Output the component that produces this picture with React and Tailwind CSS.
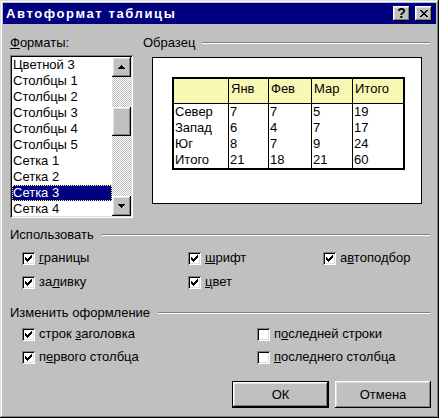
import React from "react";

const raised =
  "shadow-[inset_-1px_-1px_#000,inset_1px_1px_#dfdfdf,inset_-2px_-2px_#808080,inset_2px_2px_#fff]";
const button =
  "shadow-[inset_-1px_-1px_#000,inset_1px_1px_#fff,inset_-2px_-2px_#808080,inset_2px_2px_#dfdfdf]";
const sunken =
  "shadow-[inset_1px_1px_#808080,inset_-1px_-1px_#fff,inset_2px_2px_#000,inset_-2px_-2px_#dfdfdf]";
const dither =
  "[background-image:repeating-conic-gradient(#c0c0c0_0_25%,#fff_0_50%)] [background-size:2px_2px]";

const formats = [
  "Цветной 3",
  "Столбцы 1",
  "Столбцы 2",
  "Столбцы 3",
  "Столбцы 4",
  "Столбцы 5",
  "Сетка 1",
  "Сетка 2",
  "Сетка 3",
  "Сетка 4",
];

const columns = [
  { w: "w-[54px]", head: "", cells: ["Север", "Запад", "Юг", "Итого"] },
  { w: "w-[40px] border-l", head: "Янв", cells: ["7", "6", "8", "21"] },
  { w: "w-[43px] border-l", head: "Фев", cells: ["7", "4", "7", "18"] },
  { w: "w-[41px] border-l", head: "Мар", cells: ["5", "7", "9", "21"] },
  { w: "w-[51px] border-l", head: "Итого", cells: ["19", "17", "24", "60"] },
];

function Check({ on }) {
  return (
    <span className={`w-[13px] h-[13px] bg-white ${sunken} flex items-center justify-center shrink-0`}>
      {on && (
        <svg width="7" height="7" viewBox="0 0 7 7" shapeRendering="crispEdges">
          <path
            fill="#000"
            d="M6 0h1v1h-1zM5 1h2v1h-2zM0 2h1v1h-1zM4 2h3v1h-3zM0 3h2v1h-2zM3 3h3v1h-3zM0 4h5v1h-5zM1 5h3v1h-3zM2 6h1v1h-1z"
          />
        </svg>
      )}
    </span>
  );
}

function Option({ on, children }) {
  return (
    <div className="flex items-center h-[16px] gap-[4px]">
      <Check on={on} />
      <span className="leading-[16px] whitespace-nowrap">{children}</span>
    </div>
  );
}

function Group({ title, lineGap }) {
  return (
    <div className="flex items-center h-[16px]">
      <span className="leading-[16px] whitespace-nowrap">{title}</span>
      <div className={`flex-1 ${lineGap} h-[2px] border-t border-b border-t-[#808080] border-b-white`} />
    </div>
  );
}

function Arrow({ down }) {
  return (
    <svg width="7" height="4" viewBox="0 0 7 4" shapeRendering="crispEdges">
      <path fill="#000" d={down ? "M0 0h7v1h-7zM1 1h5v1h-5zM2 2h3v1h-3zM3 3h1v1h-1z" : "M3 0h1v1h-1zM2 1h3v1h-3zM1 2h5v1h-5zM0 3h7v1h-7z"} />
    </svg>
  );
}

export default function App() {
  return (
    <div
      className={`w-[439px] h-[418px] bg-[#c0c0c0] p-[3px] ${raised} font-['Liberation_Sans',Arial,sans-serif] text-[13px] text-black`}
    >
      {/* title bar */}
      <div className="h-[21px] bg-[#000080] flex items-center pl-[3px] pr-[4px]">
        <span className="flex-1 font-bold text-white text-[13px] tracking-[1.6px] whitespace-nowrap">
          Автоформат таблицы
        </span>
        <div
          className={`w-[17px] h-[15px] bg-[#c0c0c0] ${button} flex items-center justify-center font-bold text-[14px] leading-none pb-[1px]`}
        >
          ?
        </div>
        <div className={`ml-[5px] w-[17px] h-[15px] bg-[#c0c0c0] ${button} flex items-center justify-center`}>
          <svg width="8" height="7" viewBox="0 0 8 7" shapeRendering="crispEdges">
            <path
              fill="#000"
              d="M0 0h2v1h-2zM6 0h2v1h-2zM1 1h2v1h-2zM5 1h2v1h-2zM2 2h4v1h-4zM3 3h2v1h-2zM2 4h4v1h-4zM1 5h2v1h-2zM5 5h2v1h-2zM0 6h2v1h-2zM6 6h2v1h-2z"
            />
          </svg>
        </div>
      </div>

      <div className="pl-[7px] pr-[6px] pt-[11px]">
        {/* formats + sample */}
        <div className="flex">
          <div className="w-[123px]">
            <div className="h-[16px] leading-[16px]">
              <span className="underline">Ф</span>орматы:
            </div>
            <div className={`mt-[4px] h-[163px] p-[2px] ${sunken} bg-white flex`}>
              <div className="flex-1 overflow-hidden">
                {formats.map((f, i) => (
                  <div
                    key={f}
                    className={`h-[16px] leading-[16px] pl-[1px] whitespace-nowrap ${
                      i === 8 ? "bg-[#000080] text-white outline-1 outline-dotted outline-[#ffff80] -outline-offset-1" : ""
                    }`}
                  >
                    {f}
                  </div>
                ))}
              </div>
              <div className="w-[19px] flex flex-col">
                <div className={`h-[20px] bg-[#c0c0c0] ${button} flex items-center justify-center`}>
                  <Arrow />
                </div>
                <div className={`flex-1 ${dither} flex flex-col`}>
                  <div className="h-[30px]" />
                  <div className={`h-[29px] bg-[#c0c0c0] ${button}`} />
                </div>
                <div className={`h-[20px] bg-[#c0c0c0] ${button} flex items-center justify-center`}>
                  <Arrow down />
                </div>
              </div>
            </div>
          </div>

          <div className="ml-[10px] flex-1">
            <Group title="Образец" lineGap="ml-[7px]" />
            <div className="mt-[6px] ml-[9px] w-[270px] h-[147px] bg-white border border-black pl-[19px] pt-[19px]">
              <div className="w-[233px] border-2 border-black flex">
                {columns.map((c, i) => (
                  <div key={i} className={`${c.w} border-black`}>
                    <div className="h-[25px] border-b border-black bg-[#f8f8b4] pl-[2px] pt-[2px] leading-[16px]">
                      {c.head}
                    </div>
                    {c.cells.map((t, j) => (
                      <div key={j} className="h-[16px] leading-[16px] pl-[1px]">
                        {t}
                      </div>
                    ))}
                  </div>
                ))}
              </div>
            </div>
          </div>
        </div>

        {/* use */}
        <div className="mt-[9px]">
          <Group title="Использовать" lineGap="ml-[8px]" />
          <div className="mt-[7px] pl-[12px] grid grid-cols-[166px_135px_auto] gap-y-[8px]">
            <Option on>
              <span className="underline">г</span>раницы
            </Option>
            <Option on>
              <span className="underline">ш</span>рифт
            </Option>
            <Option on>
              а<span className="underline">в</span>топодбор
            </Option>
            <Option on>
              за<span className="underline">л</span>ивку
            </Option>
            <Option on>
              <span className="underline">ц</span>вет
            </Option>
          </div>
        </div>

        {/* modify */}
        <div className="mt-[15px]">
          <Group title="Изменить оформление" lineGap="ml-[8px]" />
          <div className="mt-[5px] pl-[12px] grid grid-cols-[235px_auto] gap-y-[7px]">
            <Option on>
              строк <span className="underline">з</span>аголовка
            </Option>
            <Option>
              п<span className="underline">о</span>следней строки
            </Option>
            <Option on>
              п<span className="underline">е</span>рвого столбца
            </Option>
            <Option>
              <span className="underline">п</span>оследнего столбца
            </Option>
          </div>
        </div>

        {/* buttons */}
        <div className="mt-[16px] flex justify-end gap-[6px] -mr-[1px]">
          <div className="w-[97px] h-[27px] border border-black">
            <div className={`h-full ${button} flex items-center justify-center`}>ОК</div>
          </div>
          <div className={`w-[96px] h-[27px] ${button} flex items-center justify-center`}>Отмена</div>
        </div>
      </div>
    </div>
  );
}
